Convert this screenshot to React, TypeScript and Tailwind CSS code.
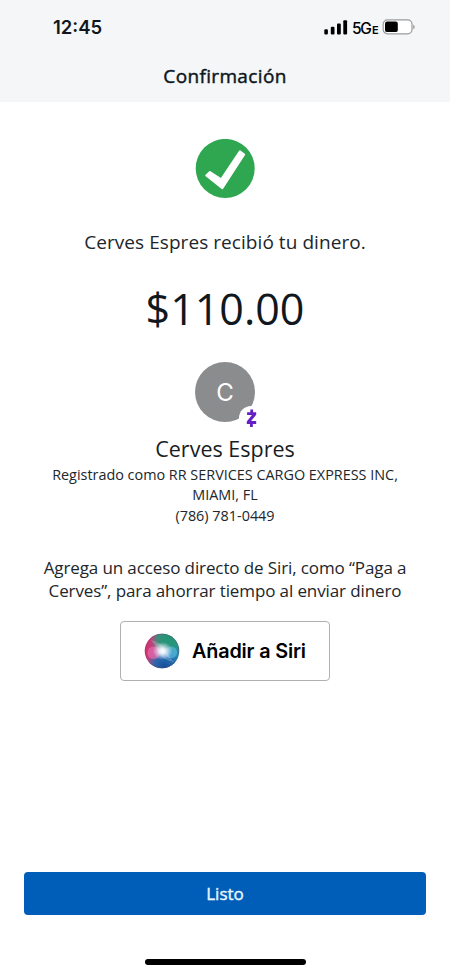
function StatusIcons() {
  return (
    <div className="flex items-center text-black">
      <svg className="h-4 w-6" viewBox="0 0 24 16">
        <rect x="0.3" y="10.3" width="3.6" height="5.2" rx="1.1" />
        <rect x="6.8" y="7.7" width="3.7" height="7.8" rx="1.1" />
        <rect x="13" y="4.6" width="3.8" height="10.9" rx="1.1" />
        <rect x="19.3" y="1.2" width="3.8" height="14.3" rx="1.1" />
      </svg>
      <span className="ml-[4.5px] mt-[3px] flex h-4 w-[27px] items-baseline whitespace-nowrap font-['Inter',sans-serif] font-medium leading-4">
        <span className="w-[17.5px] text-[15.5px] tracking-[-1.4px]">5G</span>
        <span className="ml-[2.5px] text-[11px] font-semibold">E</span>
      </span>
      <svg className="ml-[3px] h-4 w-[34px]" viewBox="0 0 34 16">
        <rect x="1.2" y="0.8" width="28.8" height="14" rx="4.3" fill="#fff" stroke="#999b9d" strokeWidth="1.2" />
        <rect x="3" y="2.5" width="12.8" height="10.6" rx="2.2" />
        <path d="M31.2 5.5q1.5.8 1.5 2.4t-1.5 2.4z" fill="#999b9d" />
      </svg>
    </div>
  );
}

function CheckMark() {
  return (
    <svg className="mt-[37px] h-[60px] w-[60px] shrink-0" viewBox="0 0 60 60">
      <circle cx="30.2" cy="29.4" r="29.5" fill="#2fa650" />
      <path
        d="M11.3 36.4L14.9 33L26.2 40.4L44.9 12.4L49.2 15.5L27.3 49.1Z"
        fill="#fff"
        stroke="#fff"
        strokeWidth="2"
        strokeLinejoin="round"
      />
    </svg>
  );
}

function Avatar() {
  return (
    <div className="relative mt-[26px] flex h-[60px] w-[60px] shrink-0 items-center justify-center rounded-full bg-[#8b8c8e]">
      <span className="mt-px font-['Inter',sans-serif] text-[24px] leading-[60px] text-white">C</span>
      <svg className="absolute left-[43px] top-[43px] h-[26px] w-[26px]" viewBox="0 0 26 26">
        <circle cx="13" cy="13" r="12" fill="#fff" />
        <path
          d="M9.1 7.2H18.2V9.7L13.1 16.1H18.2V19H8.8V16.4L13.9 10H9.1ZM12.3 4.6H15.1V8H12.3ZM12 18H14.8V21.9H12Z"
          fill="#6420c5"
        />
      </svg>
    </div>
  );
}

function SiriOrb() {
  return (
    <svg className="h-9 w-9 shrink-0" viewBox="0 0 36 36">
      <defs>
        <linearGradient id="orbBase" x1="0" y1="0.4" x2="1" y2="0.6">
          <stop offset="0" stopColor="#d52f6c" />
          <stop offset="0.35" stopColor="#b14f87" />
          <stop offset="0.6" stopColor="#328ba3" />
          <stop offset="1" stopColor="#1e8fb5" />
        </linearGradient>
        <radialGradient id="orbGreen" cx="0.68" cy="0.14" r="0.5">
          <stop offset="0" stopColor="#229572" />
          <stop offset="0.6" stopColor="#279879" stopOpacity="0.85" />
          <stop offset="1" stopColor="#279879" stopOpacity="0" />
        </radialGradient>
        <radialGradient id="orbBlue" cx="0.56" cy="0.94" r="0.5">
          <stop offset="0" stopColor="#154e9b" />
          <stop offset="0.6" stopColor="#2369b0" stopOpacity="0.85" />
          <stop offset="1" stopColor="#2369b0" stopOpacity="0" />
        </radialGradient>
        <radialGradient id="orbGlow" cx="0.5" cy="0.5" r="0.5">
          <stop offset="0" stopColor="#fff" />
          <stop offset="0.3" stopColor="#f4f6ff" stopOpacity="0.9" />
          <stop offset="1" stopColor="#dfe8fa" stopOpacity="0" />
        </radialGradient>
        <clipPath id="orbClip">
          <circle cx="18" cy="18" r="17.3" />
        </clipPath>
      </defs>
      <g clipPath="url(#orbClip)">
        <rect width="36" height="36" fill="url(#orbBase)" />
        <rect width="36" height="36" fill="url(#orbGreen)" />
        <rect width="36" height="36" fill="url(#orbBlue)" />
        <circle cx="9.8" cy="19.8" r="6.3" fill="#e76aae" opacity="0.7" />
        <circle cx="27.2" cy="19.3" r="5.9" fill="#5cb9e4" opacity="0.65" />
        <path d="M7 7Q19 10 22 18Q26 25 30 29Q19 27 15 20Q12 13 7 7Z" fill="#fff" opacity="0.2" />
        <ellipse cx="18.6" cy="18" rx="10" ry="9" fill="url(#orbGlow)" />
        <circle cx="18" cy="18" r="16.8" fill="none" stroke="#7b3d67" strokeOpacity="0.35" />
      </g>
    </svg>
  );
}

export default function App() {
  return (
    <div className="flex h-[975px] w-[450px] flex-col overflow-hidden bg-white font-['Open_Sans',sans-serif] text-[#20262b]">
      <header className="h-[102px] shrink-0 bg-[#f4f6f8] text-[#10161b]">
        <div className="flex h-[54px] items-center justify-between pl-[53px] pr-[34px]">
          <span className="font-['Inter',sans-serif] text-[18.5px] font-semibold leading-5">12:45</span>
          <StatusIcons />
        </div>
        <h1 className="mt-[10px] text-center text-[19px] leading-6 tracking-[0.35px] [-webkit-text-stroke:0.45px_#10161b]">Confirmación</h1>
      </header>

      <main className="flex flex-1 flex-col items-center">
        <CheckMark />
        <p className="mt-[31px] whitespace-nowrap text-[19px] leading-6 tracking-[0.06px]">Cerves Espres recibió tu dinero.</p>
        <p className="mt-[28px] whitespace-nowrap text-[43px] leading-[54px] text-[#10181e]">$110.00</p>
        <Avatar />
        <h2 className="mt-[13px] whitespace-nowrap text-[21.5px] leading-7 text-[#181e23]">Cerves Espres</h2>
        <p className="mt-[2px] whitespace-nowrap text-center text-[14.4px] leading-5">
          Registrado como RR SERVICES CARGO EXPRESS INC,
          <br />
          MIAMI, FL
        </p>
        <p className="whitespace-nowrap text-[14.4px] leading-[21px]">(786) 781-0449</p>
        <p className="mt-[30px] whitespace-nowrap text-center text-[17px] leading-[23px] tracking-[-0.11px]">
          Agrega un acceso directo de Siri, como “Paga a
          <br />
          Cerves”, para ahorrar tiempo al enviar dinero
        </p>
        <button className="mt-[19px] flex h-[60px] w-[210px] items-center rounded-[4px] border border-[#aeb0b2] pl-[23px] text-black">
          <SiriOrb />
          <span className="ml-3 mt-px whitespace-nowrap font-['Inter',sans-serif] text-[19.8px] font-semibold tracking-[-0.15px]">Añadir a Siri</span>
        </button>
      </main>

      <footer className="flex h-[103px] shrink-0 flex-col items-center">
        <button className="h-[43px] w-[402px] rounded-[4px] bg-[#005eb8] text-[17px] leading-[43px] text-[#e9f5ff] [-webkit-text-stroke:0.4px_#e9f5ff]">Listo</button>
        <div className="mt-[44px] h-[6px] w-[161px] rounded-full bg-black" />
      </footer>
    </div>
  );
}
